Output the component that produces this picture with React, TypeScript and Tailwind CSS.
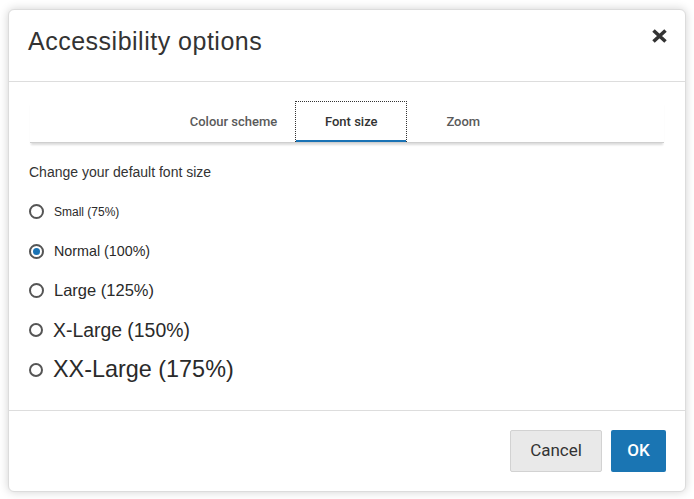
import React from "react";

const options = [
  { label: "Small (75%)", size: "text-[12px]", ring: "w-[15px] h-[15px]" },
  { label: "Normal (100%)", size: "text-[14.3px]", ring: "w-[15px] h-[15px]" },
  { label: "Large (125%)", size: "text-[16.5px]", ring: "w-[15px] h-[15px]" },
  { label: "X-Large (150%)", size: "text-[19.4px]", ring: "w-[14px] h-[14px]" },
  { label: "XX-Large (175%)", size: "text-[23.4px]", ring: "w-[14px] h-[14px]" },
];

const tabs = ["Colour scheme", "Font size", "Zoom"];

export default function App() {
  const selected = 1;
  const activeTab = 1;

  return (
    <div className="w-[694px] h-[499px] bg-white pl-[8px] pt-[9px]">
      <div className="w-[678px] h-[483px] flex flex-col bg-white border border-[#dcdcdc] rounded-[6px] shadow-[0_0_10px_rgba(0,0,0,0.18)] text-[#333]">
        {/* header */}
        <div className="h-[72px] shrink-0 flex items-start justify-between border-b border-[#dddddd] pl-[19px] pr-[18px] pt-[16px]">
          <h1
            className="text-[25px] leading-[30px] tracking-[0.5px] text-[#333]"
            style={{ fontFamily: '"Liberation Sans", Arial, sans-serif' }}
          >
            Accessibility options
          </h1>
          <button className="mt-[3px]" aria-label="Close">
            <svg width="15" height="14" viewBox="0 0 15 14">
              <path d="M1.5 1.5 L13.5 12.5 M13.5 1.5 L1.5 12.5" stroke="#333" strokeWidth="3.6" />
            </svg>
          </button>
        </div>

        {/* tabs */}
        <div className="mx-[21px] mt-[19px] pr-[3px] flex justify-center border-b border-[#cfcfcf] shadow-[0_3px_2px_-1px_rgba(0,0,0,0.14)]">
          {tabs.map((t, i) => (
            <div
              key={t}
              className={
                i === activeTab
                  ? "min-w-[112px] h-[41px] px-[18px] flex items-center justify-center border border-dotted border-[#333] border-b-0 shadow-[inset_0_-2px_0_#1a73b5] text-[13px] font-medium text-[#333]"
                  : "min-w-[112px] h-[41px] px-[18px] flex items-center justify-center text-[13px] font-medium text-[#5a5a5a]"
              }
              style={{ fontFamily: "Roboto, sans-serif" }}
            >
              {t}
            </div>
          ))}
        </div>

        {/* body */}
        <div
          className="flex-1 flex flex-col pl-[20px] pt-[9px]"
          style={{ fontFamily: '"Liberation Sans", Arial, sans-serif' }}
        >
          <div className="h-[40px] flex items-center text-[14px] text-[#333]">
            Change your default font size
          </div>
          {options.map((o, i) => (
            <label key={o.label} className="h-[39.5px] flex items-center">
              <span
                className={`${o.ring} shrink-0 rounded-full border-2 border-[#555] bg-white flex items-center justify-center`}
              >
                {i === selected && <span className="w-[7px] h-[7px] rounded-full bg-[#1a73b5]" />}
              </span>
              <span className={`ml-[10px] ${o.size} text-[#2a2a2a]`}>{o.label}</span>
            </label>
          ))}
        </div>

        {/* footer */}
        <div
          className="h-[81px] shrink-0 border-t border-[#dddddd] flex items-center justify-end gap-[9px] pr-[19px]"
          style={{ fontFamily: "Roboto, sans-serif" }}
        >
          <button className="w-[92px] h-[42px] bg-[#e9e9e9] border border-[#d2d2d2] rounded-[2px] text-[17px] text-[#333]">
            Cancel
          </button>
          <button className="w-[55px] h-[42px] bg-[#1a75b3] rounded-[2px] text-[17px] font-medium text-white">
            OK
          </button>
        </div>
      </div>
    </div>
  );
}
